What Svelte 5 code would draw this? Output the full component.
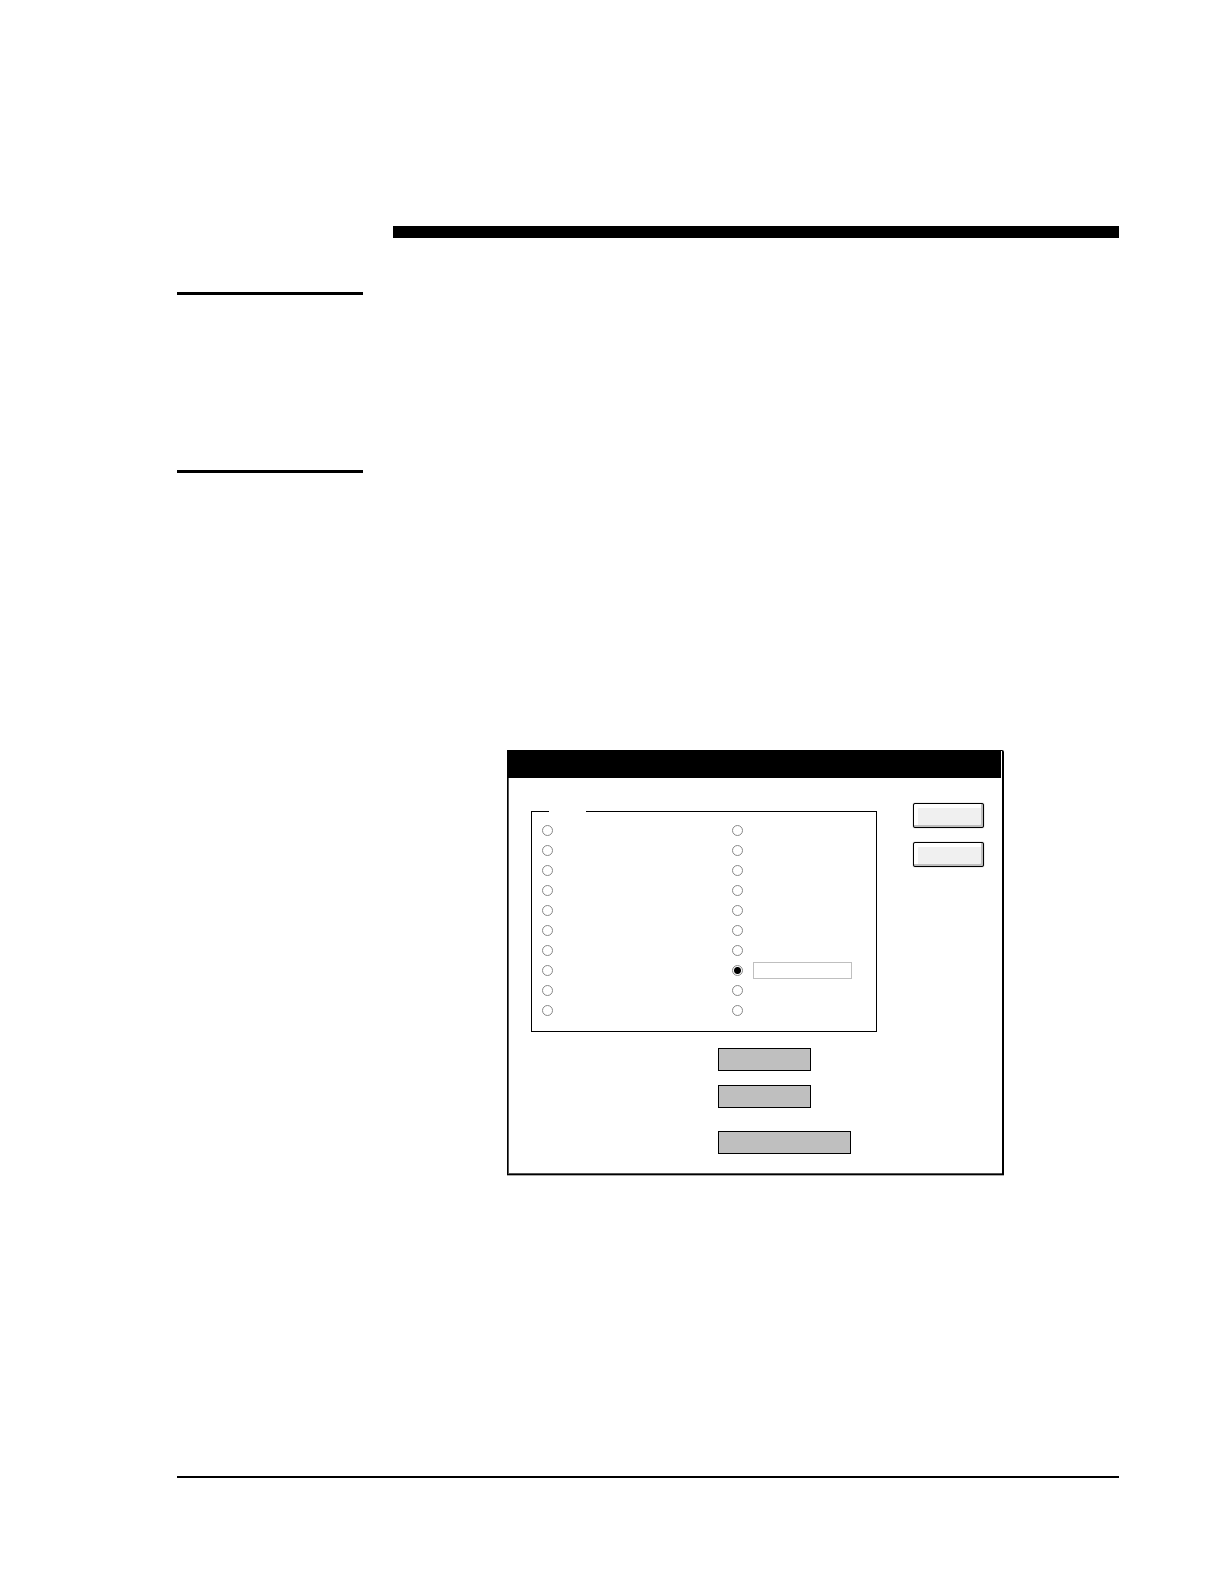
<script lang="ts">
	const columns = [
		[1, 2, 3, 4, 5, 6, 7, 8, 9, 10],
		[11, 12, 13, 14, 15, 16, 17, 18, 19, 20]
	];
	// this option carries its own text box
	const custom = 18;

	let selected = $state(custom);
	let customValue = $state('');
</script>

<div class="page">
	<div class="bar"></div>

	<section class="intro">
		<hr />
	</section>

	<section class="topic">
		<hr />
		<div class="content">
			<div class="dialog" role="dialog" aria-label="Dialog">
				<div class="title"></div>
				<div class="body">
					<form>
						<fieldset>
							<legend></legend>
							<div class="columns">
								{#each columns as options}
									<div class="options">
										{#each options as option}
											<div class="option">
												<input
													type="radio"
													name="option"
													value={option}
													aria-label="Option {option}"
													bind:group={selected}
												/>
												{#if option === custom}
													<input
														type="text"
														class="custom"
														aria-label="Custom value"
														bind:value={customValue}
													/>
												{/if}
											</div>
										{/each}
									</div>
								{/each}
							</div>
						</fieldset>

						<div class="fields">
							<input type="text" class="field" aria-label="First value" />
							<input type="text" class="field" aria-label="Second value" />
							<input type="text" class="field wide" aria-label="Third value" />
						</div>
					</form>

					<div class="actions">
						<button type="button" aria-label="OK"></button>
						<button type="button" aria-label="Cancel"></button>
					</div>
				</div>
			</div>
		</div>
	</section>

	<footer></footer>
</div>

<style>
	:global(body) {
		background: #fff;
		font-family: 'Liberation Sans', sans-serif;
	}

	.page {
		box-sizing: border-box;
		display: flex;
		flex-direction: column;
		min-height: 100vh;
		padding: 226px 105px 106px 177px;
	}

	.bar {
		height: 12px;
		margin: 0 0 54px 216px;
		background: #000;
	}

	section {
		display: grid;
		grid-template-columns: 186px 1fr;
		column-gap: 30px;
		align-items: start;
	}

	.intro {
		min-height: 178px;
	}

	hr {
		width: 100%;
		height: 3px;
		margin: 0;
		border: none;
		background: #000;
	}

	.content {
		padding: 280px 114px 0;
	}

	.dialog {
		box-sizing: border-box;
		max-width: 497px;
		border: 1px solid #000;
		border-right-width: 2px;
		border-top-right-radius: 2px;
		box-shadow:
			inset 1px -1px 0 #555,
			0 1px 0 #aaa;
	}

	.title {
		height: 27px;
		margin-right: 1px;
		background: #000;
	}

	.body {
		display: grid;
		grid-template-columns: 1fr 71px;
		column-gap: 36px;
		padding: 25px 18px 20px 23px;
	}

	fieldset {
		min-width: 0;
		margin: 0;
		padding: 1px 10px 11px;
		border: 1px solid #000;
	}

	legend {
		width: 37px;
		height: 17px;
		margin-left: 7px;
		padding: 0;
	}

	.columns {
		display: grid;
		grid-template-columns: 190px 1fr;
	}

	.options {
		display: flex;
		flex-direction: column;
		gap: 1px;
	}

	.option {
		display: flex;
		align-items: center;
		gap: 10px;
		height: 19px;
	}

	input {
		box-sizing: border-box;
		margin: 0;
		font: inherit;
		font-size: 12px;
	}

	input[type='radio'] {
		appearance: none;
		width: 11px;
		height: 11px;
		border: 1px solid #888;
		border-radius: 50%;
	}

	input[type='radio']:checked {
		background: radial-gradient(circle, #000 3px, transparent 4px);
	}

	.custom {
		width: 99px;
		height: 17px;
		padding: 0 4px;
		border: 1px solid #bfbfbf;
		background: #fff;
	}

	.fields {
		display: flex;
		flex-direction: column;
		gap: 14px;
		padding: 16px 0 0 187px;
	}

	.field {
		width: 93px;
		height: 23px;
		padding: 0 4px;
		border: 1px solid #000;
		border-radius: 0;
		background: #bfbfbf;
	}

	.field.wide {
		width: 133px;
		margin-top: 9px;
	}

	.actions {
		display: flex;
		flex-direction: column;
		gap: 14px;
	}

	button {
		height: 25px;
		padding: 0;
		border: 1px solid #000;
		border-radius: 2px;
		background: #f0f0f0;
		box-shadow:
			inset -2px -2px 0 #bfbfbf,
			inset 4px 4px 0 #fff,
			0 0 1px #555;
	}

	footer {
		height: 2px;
		margin-top: auto;
		background: #000;
	}
</style>
